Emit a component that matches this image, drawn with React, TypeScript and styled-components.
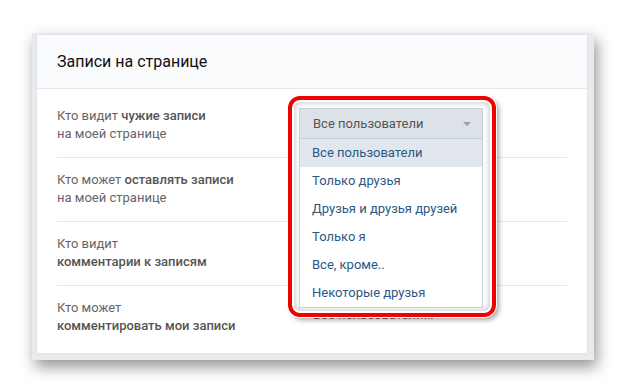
import React from "react";
import styled, { createGlobalStyle } from "styled-components";

const GlobalStyle = createGlobalStyle`
  html, body {
    margin: 0;
    background: #ffffff;
  }
  body {
    font-family: Roboto, "Noto Sans", "DejaVu Sans", sans-serif;
    -webkit-font-smoothing: antialiased;
  }
`;

const options = [
  "Все пользователи",
  "Только друзья",
  "Друзья и друзья друзей",
  "Только я",
  "Все, кроме..",
  "Некоторые друзья",
];

const rows = [
  { plain: "Кто видит ", bold: "чужие записи", rest: "на моей странице", boldSecond: false },
  { plain: "Кто может ", bold: "оставлять записи", rest: "на моей странице", boldSecond: false },
  { plain: "Кто видит", bold: "", rest: "комментарии к записям", boldSecond: true },
  { plain: "Кто может", bold: "", rest: "комментировать мои записи", boldSecond: true },
];

export default function App() {
  return (
    <Page>
      <GlobalStyle />
      <Frame>
        <Card>
          <Header>Записи на странице</Header>
          <Body>
            {rows.map((row, index) => (
              <Row key={index} $last={index === rows.length - 1}>
                <Label>
                  <div>
                    {row.plain}
                    {row.bold && <Strong>{row.bold}</Strong>}
                  </div>
                  <div>{row.boldSecond ? <Strong>{row.rest}</Strong> : row.rest}</div>
                </Label>
                {index === 0 && (
                  <Dropdown>
                    <Peek>Все пользователи...</Peek>
                    <Highlight />
                    <Select>
                      <span>Все пользователи</span>
                      <Arrow />
                    </Select>
                    <Menu>
                      {options.map((option, i) => (
                        <Item key={option} $active={i === 0}>
                          {option}
                        </Item>
                      ))}
                    </Menu>
                  </Dropdown>
                )}
              </Row>
            ))}
          </Body>
        </Card>
      </Frame>
    </Page>
  );
}

const Page = styled.div`
  padding: 33px 0 30px 32px;
`;

const Frame = styled.div`
  width: 552px;
  padding: 1px 6px 6px 4px;
  background: #e9eaed;
  box-shadow: 3px 7px 14px rgba(0, 0, 0, 0.42);
`;

const Card = styled.div`
  background: #ffffff;
  border: 1px solid #dfe2e7;
  border-radius: 2px;
`;

const Header = styled.div`
  display: flex;
  align-items: center;
  height: 53px;
  padding: 0 20px;
  background: #fafbfc;
  border-bottom: 1px solid #e7e8ec;
  font-size: 16px;
  color: #111;
`;

const Body = styled.div`
  padding: 5px 20px 4px;
`;

const Row = styled.div<{ $last?: boolean }>`
  display: grid;
  grid-template-columns: 242px 184px;
  align-items: start;
  padding: 13px 0 14px;
  border-bottom: ${(p) => (p.$last ? "none" : "1px solid #e7e8ec")};
`;

const Label = styled.div`
  font-size: 13px;
  line-height: 18px;
  color: #656565;
`;

const Strong = styled.span`
  font-weight: 500;
  color: #555;
`;

const Dropdown = styled.div`
  position: relative;
  margin-top: 1px;
`;

const Highlight = styled.div`
  position: absolute;
  top: -12px;
  left: -11px;
  width: 208px;
  height: 221px;
  box-sizing: border-box;
  border: 4px solid #f20000;
  border-radius: 12px;
  background: #ffffff;
  box-shadow: 0 0 0 1px #ffffff, 3px 3px 5px rgba(0, 0, 0, 0.35),
    inset 0 0 0 2px #ffffff, inset 0 0 6px 2px rgba(0, 0, 0, 0.28);
  z-index: 1;
`;

const Peek = styled.div`
  position: absolute;
  top: 199px;
  left: 14px;
  font-size: 13px;
  line-height: 15px;
  color: #6a6a6a;
  white-space: nowrap;
`;

const Select = styled.div`
  position: relative;
  z-index: 2;
  display: flex;
  align-items: center;
  justify-content: space-between;
  box-sizing: border-box;
  height: 31px;
  padding: 0 11px 0 13px;
  background: #dde2e8;
  border: 1px solid #c5d0db;
  font-size: 13px;
  color: #555;
`;

const Arrow = styled.span`
  width: 0;
  height: 0;
  border-left: 4px solid transparent;
  border-right: 4px solid transparent;
  border-top: 4px solid #939fae;
`;

const Menu = styled.div`
  position: absolute;
  top: 31px;
  left: 0;
  width: 184px;
  box-sizing: border-box;
  z-index: 2;
  background: #ffffff;
  border: 1px solid #c5d0db;
  border-top: none;
`;

const Item = styled.div<{ $active?: boolean }>`
  height: 28px;
  line-height: 28px;
  padding-left: 12px;
  font-size: 13px;
  color: #2a5885;
  background: ${(p) => (p.$active ? "#e1e7ed" : "#ffffff")};
  white-space: nowrap;
`;
